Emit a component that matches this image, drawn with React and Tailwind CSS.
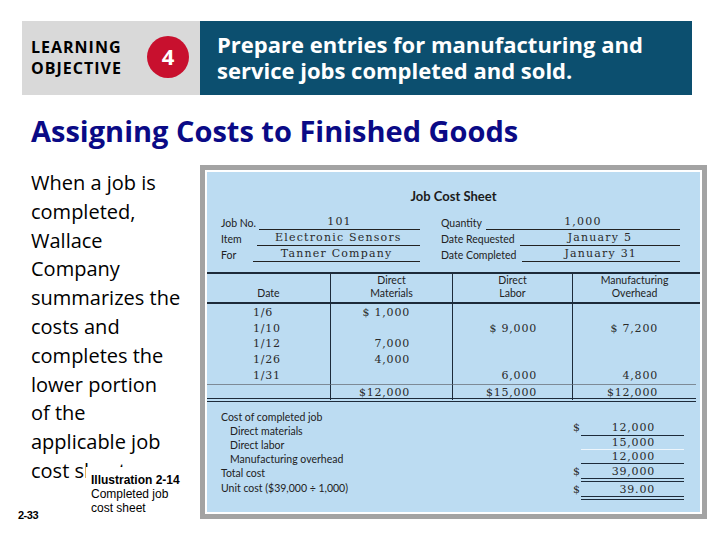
import React from 'react';

const sans = { fontFamily: '"Open Sans", "Noto Sans", sans-serif' };

const bodyLines = [
  'When a job is',
  'completed,',
  'Wallace',
  'Company',
  'summarizes the',
  'costs and',
  'completes the',
  'lower portion',
  'of the',
  'applicable job',
  'cost sheet.',
];

const rows = [
  { date: '1/6', dm: '$ 1,000', dl: '', oh: '' },
  { date: '1/10', dm: '', dl: '$ 9,000', oh: '$ 7,200' },
  { date: '1/12', dm: '7,000', dl: '', oh: '' },
  { date: '1/26', dm: '4,000', dl: '', oh: '' },
  { date: '1/31', dm: '', dl: '6,000', oh: '4,800' },
];

const FieldRow = ({ label, value, gap }) => (
  <div className="flex items-end h-[16px]">
    <span className="font-['Lato'] text-[10.5px] leading-[14px] text-[#222]">{label}</span>
    <div className={`flex-1 h-[16px] border-b border-[#222] text-center font-['DejaVu_Serif'] text-[11px] leading-[15px] tracking-[1.2px] text-[#2a2a2a] ${gap}`}>
      {value}
    </div>
  </div>
);

const JobCostSheet = () => (
  <div className="w-[507px] h-[354px] border-[5px] border-[#a3a3a3] bg-[#a3a3a3]">
    <div className="h-full border-2 border-white bg-[#bcdcf2] flex flex-col">
      <div className="mt-[16px] text-center font-['Lato'] font-bold text-[13px] leading-[16px] text-[#1b1b1b]">
        Job Cost Sheet
      </div>

      {/* header fields */}
      <div className="flex mt-[10px] h-[48px]">
        <div className="w-[199px] ml-[14px] flex flex-col">
          <FieldRow label="Job No." value="101" gap="ml-[3px]" />
          <FieldRow label="Item" value="Electronic Sensors" gap="ml-[15px]" />
          <FieldRow label="For" value="Tanner Company" gap="ml-[17px]" />
        </div>
        <div className="w-[239px] ml-[21px] flex flex-col">
          <FieldRow label="Quantity" value="1,000" gap="ml-[4px]" />
          <FieldRow label="Date Requested" value="January 5" gap="ml-[5px]" />
          <FieldRow label="Date Completed" value="January 31" gap="ml-[5px]" />
        </div>
      </div>

      {/* table */}
      <div className="mt-[10px] border-t-2 border-[#1d2b3a]">
        <div className="grid grid-cols-[123px_122px_120px_124px] font-['Lato'] text-[10.5px] leading-[13px] text-[#222] border-b-2 border-[#1d2b3a] h-[30px]">
          <div className="flex flex-col justify-end items-center pb-[2px]">Date</div>
          <div className="flex flex-col justify-end items-center pb-[2px] border-l border-[#1d2b3a]">
            <span>Direct</span>
            <span>Materials</span>
          </div>
          <div className="flex flex-col justify-end items-center pb-[2px] border-l border-[#1d2b3a]">
            <span>Direct</span>
            <span>Labor</span>
          </div>
          <div className="flex flex-col justify-end items-center pb-[2px] border-l border-[#1d2b3a]">
            <span>Manufacturing</span>
            <span>Overhead</span>
          </div>
        </div>
        <div className="grid grid-cols-[123px_122px_120px_124px] font-['DejaVu_Serif'] text-[11px] leading-[15.7px] tracking-[0.8px] text-[#2a2a2a]">
          <div className="pt-[1px] pl-[46px] border-b border-[#7d8a96]">
            {rows.map((r) => (
              <div key={r.date}>{r.date}</div>
            ))}
          </div>
          <div className="pt-[1px] pr-[42px] text-right border-l border-b border-[#1d2b3a] border-b-[#7d8a96]">
            {rows.map((r) => (
              <div key={r.date} className="h-[15.7px]">{r.dm}</div>
            ))}
          </div>
          <div className="pt-[1px] pr-[35px] text-right border-l border-b border-[#1d2b3a] border-b-[#7d8a96]">
            {rows.map((r) => (
              <div key={r.date} className="h-[15.7px]">{r.dl}</div>
            ))}
          </div>
          <div className="pt-[1px] pr-[38px] text-right border-l border-b border-[#1d2b3a] border-b-[#7d8a96]">
            {rows.map((r) => (
              <div key={r.date} className="h-[15.7px]">{r.oh}</div>
            ))}
          </div>
          <div className="h-[17px] border-b-4 border-double border-[#1d2b3a]"></div>
          <div className="h-[17px] pr-[42px] text-right border-l border-[#1d2b3a] border-b-4 border-double border-b-[#1d2b3a] leading-[16px]">$12,000</div>
          <div className="h-[17px] pr-[35px] text-right border-l border-[#1d2b3a] border-b-4 border-double border-b-[#1d2b3a] leading-[16px]">$15,000</div>
          <div className="h-[17px] pr-[38px] text-right border-l border-[#1d2b3a] border-b-4 border-double border-b-[#1d2b3a] leading-[16px]">$12,000</div>
        </div>
      </div>

      {/* summary */}
      <div className="flex">
        <div className="flex-1 pl-[14px] pt-[8px] font-['Lato'] text-[10.5px] leading-[14.2px] text-[#222]">
          <div>Cost of completed job</div>
          <div className="pl-[9px]">Direct materials</div>
          <div className="pl-[9px]">Direct labor</div>
          <div className="pl-[9px]">Manufacturing overhead</div>
          <div>Total cost</div>
          <div>Unit cost ($39,000 ÷ 1,000)</div>
        </div>
        <div className="w-[127px] pt-[19px] font-['DejaVu_Serif'] text-[11px] leading-[14px] tracking-[0.8px] text-[#2a2a2a]">
          <div className="flex h-[15px]">
            <span className="w-[8px]">$</span>
            <span className="w-[103px] text-right pr-[29px] border-b border-[#1d2b3a]">12,000</span>
          </div>
          <div className="flex h-[14px]">
            <span className="w-[8px]"></span>
            <span className="w-[103px] text-right pr-[29px] border-b border-[#eef6fc]">15,000</span>
          </div>
          <div className="flex h-[14px]">
            <span className="w-[8px]"></span>
            <span className="w-[103px] text-right pr-[29px] border-b border-[#1d2b3a]">12,000</span>
          </div>
          <div className="flex h-[18px]">
            <span className="w-[8px] pt-[1px]">$</span>
            <span className="w-[103px] text-right pr-[29px] pt-[1px] border-b-4 border-double border-[#1d2b3a]">39,000</span>
          </div>
          <div className="flex h-[18px]">
            <span className="w-[8px] pt-[1px]">$</span>
            <span className="w-[103px] text-right pr-[29px] pt-[1px] border-b-4 border-double border-[#1d2b3a]">39.00</span>
          </div>
        </div>
      </div>
    </div>
  </div>
);

export default function App() {
  return (
    <div className="relative w-[720px] h-[540px] bg-white overflow-hidden" style={sans}>
      {/* learning objective banner */}
      <div className="flex ml-[22px] pt-[21px] h-[95px]">
        <div className="w-[178px] bg-[#d9d9d9] flex items-center pl-[9px]">
          <div className="w-[116px] text-[16px] font-bold leading-[21px] text-black tracking-[1px]">
            LEARNING
            <br />
            OBJECTIVE
          </div>
          <div className="w-[42px] h-[42px] rounded-full bg-[#c8102e] text-white text-[22px] font-bold flex items-center justify-center -mt-[3px]">
            4
          </div>
        </div>
        <div className="w-[492px] bg-[#0c4f6f] text-white font-bold text-[22px] leading-[26px] pl-[17px] flex items-center pb-[2px]">
          Prepare entries for manufacturing and
          <br />
          service jobs completed and sold.
        </div>
      </div>

      <h1 className="pl-[31px] mt-[18px] text-[29px] leading-[36px] font-bold text-[#0a0a86]">
        Assigning Costs to Finished Goods
      </h1>

      <div className="flex mt-[16px]">
        <div className="w-[200px] pl-[31px] pt-[4px] text-[20px] leading-[28.8px] text-black">
          {bodyLines.map((l) => (
            <div key={l}>{l}</div>
          ))}
        </div>
        <JobCostSheet />
      </div>

      {/* illustration caption */}
      <div className="absolute left-[86px] top-[467px] w-[114px] h-[53px] bg-white pl-[5px] pt-[6px] font-['Liberation_Sans'] text-[12px] leading-[14px] text-black">
        <div className="font-bold">Illustration 2-14</div>
        <div>Completed job</div>
        <div>cost sheet</div>
      </div>
      <div className="absolute left-[18px] top-[508px] font-['Liberation_Sans'] font-bold text-[11px] leading-[14px] tracking-[-0.5px] text-black">
        2-33
      </div>
    </div>
  );
}
